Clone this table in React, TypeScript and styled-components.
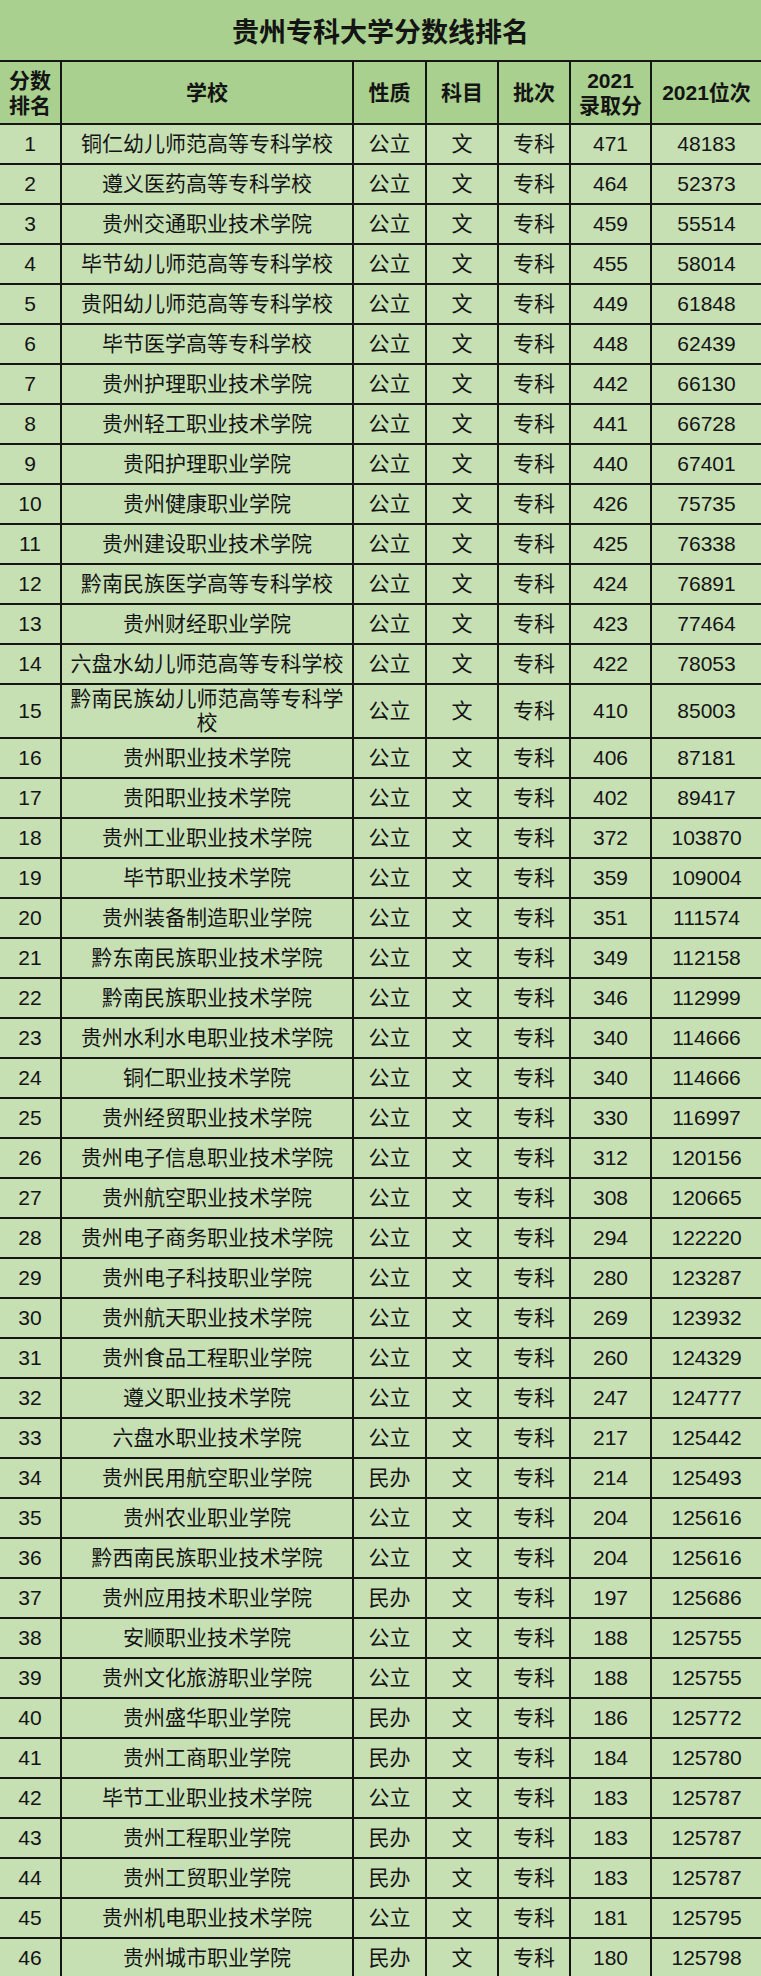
import * as React from 'react'
import styled, { createGlobalStyle } from 'styled-components'

const rows: [string, string, number, number][] = [
  ['铜仁幼儿师范高等专科学校', '公立', 471, 48183],
  ['遵义医药高等专科学校', '公立', 464, 52373],
  ['贵州交通职业技术学院', '公立', 459, 55514],
  ['毕节幼儿师范高等专科学校', '公立', 455, 58014],
  ['贵阳幼儿师范高等专科学校', '公立', 449, 61848],
  ['毕节医学高等专科学校', '公立', 448, 62439],
  ['贵州护理职业技术学院', '公立', 442, 66130],
  ['贵州轻工职业技术学院', '公立', 441, 66728],
  ['贵阳护理职业学院', '公立', 440, 67401],
  ['贵州健康职业学院', '公立', 426, 75735],
  ['贵州建设职业技术学院', '公立', 425, 76338],
  ['黔南民族医学高等专科学校', '公立', 424, 76891],
  ['贵州财经职业学院', '公立', 423, 77464],
  ['六盘水幼儿师范高等专科学校', '公立', 422, 78053],
  ['黔南民族幼儿师范高等专科学校', '公立', 410, 85003],
  ['贵州职业技术学院', '公立', 406, 87181],
  ['贵阳职业技术学院', '公立', 402, 89417],
  ['贵州工业职业技术学院', '公立', 372, 103870],
  ['毕节职业技术学院', '公立', 359, 109004],
  ['贵州装备制造职业学院', '公立', 351, 111574],
  ['黔东南民族职业技术学院', '公立', 349, 112158],
  ['黔南民族职业技术学院', '公立', 346, 112999],
  ['贵州水利水电职业技术学院', '公立', 340, 114666],
  ['铜仁职业技术学院', '公立', 340, 114666],
  ['贵州经贸职业技术学院', '公立', 330, 116997],
  ['贵州电子信息职业技术学院', '公立', 312, 120156],
  ['贵州航空职业技术学院', '公立', 308, 120665],
  ['贵州电子商务职业技术学院', '公立', 294, 122220],
  ['贵州电子科技职业学院', '公立', 280, 123287],
  ['贵州航天职业技术学院', '公立', 269, 123932],
  ['贵州食品工程职业学院', '公立', 260, 124329],
  ['遵义职业技术学院', '公立', 247, 124777],
  ['六盘水职业技术学院', '公立', 217, 125442],
  ['贵州民用航空职业学院', '民办', 214, 125493],
  ['贵州农业职业学院', '公立', 204, 125616],
  ['黔西南民族职业技术学院', '公立', 204, 125616],
  ['贵州应用技术职业学院', '民办', 197, 125686],
  ['安顺职业技术学院', '公立', 188, 125755],
  ['贵州文化旅游职业学院', '公立', 188, 125755],
  ['贵州盛华职业学院', '民办', 186, 125772],
  ['贵州工商职业学院', '民办', 184, 125780],
  ['毕节工业职业技术学院', '公立', 183, 125787],
  ['贵州工程职业学院', '民办', 183, 125787],
  ['贵州工贸职业学院', '民办', 183, 125787],
  ['贵州机电职业技术学院', '公立', 181, 125795],
  ['贵州城市职业学院', '民办', 180, 125798],
]

const colWidths = [61, 292, 73, 72, 72, 81, 110]

const GlobalStyle = createGlobalStyle`
  html, body {
    margin: 0;
    padding: 0;
    background: #c6e0b4;
  }
  body {
    font-family: "Liberation Sans", "Noto Sans CJK SC", sans-serif;
    color: #141414;
  }
`

const Sheet = styled.table`
  width: 761px;
  border-collapse: collapse;
  table-layout: fixed;
  background: #c6e0b4;
`

const TitleCell = styled.th`
  height: 60px;
  padding: 0;
  background: #a9d08e;
  font-size: 27px;
  font-weight: 700;
  text-align: center;
  border-bottom: 2px solid #161616;
`

const HeadCell = styled.th`
  height: 61px;
  padding: 0 1px;
  background: #a9d08e;
  font-size: 21px;
  font-weight: 700;
  line-height: 25px;
  text-align: center;
  vertical-align: middle;
  border: 2px solid #161616;
  &:first-child { border-left: none; }
  &:last-child { border-right: none; }
`

const Row = styled.tr<{ $tall?: boolean }>`
  height: ${({ $tall }) => ($tall ? 54 : 40)}px;
`

const Cell = styled.td`
  padding: 0 3px;
  font-size: 21px;
  line-height: 24px;
  text-align: center;
  vertical-align: middle;
  border: 2px solid #161616;
  &:first-child { border-left: none; }
  &:last-child { border-right: none; }
`

export default function App() {
  return (
    <>
      <GlobalStyle />
      <Sheet>
        <colgroup>
          {colWidths.map((w, i) => (
            <col key={i} style={{ width: w }} />
          ))}
        </colgroup>
        <thead>
          <tr>
            <TitleCell colSpan={7}>贵州专科大学分数线排名</TitleCell>
          </tr>
          <tr>
            <HeadCell>分数<br />排名</HeadCell>
            <HeadCell>学校</HeadCell>
            <HeadCell>性质</HeadCell>
            <HeadCell>科目</HeadCell>
            <HeadCell>批次</HeadCell>
            <HeadCell>2021<br />录取分</HeadCell>
            <HeadCell>2021位次</HeadCell>
          </tr>
        </thead>
        <tbody>
          {rows.map(([name, kind, score, rank], i) => (
            <Row key={i} $tall={name.length > 13}>
              <Cell>{i + 1}</Cell>
              <Cell>{name}</Cell>
              <Cell>{kind}</Cell>
              <Cell>文</Cell>
              <Cell>专科</Cell>
              <Cell>{score}</Cell>
              <Cell>{rank}</Cell>
            </Row>
          ))}
        </tbody>
      </Sheet>
    </>
  )
}
